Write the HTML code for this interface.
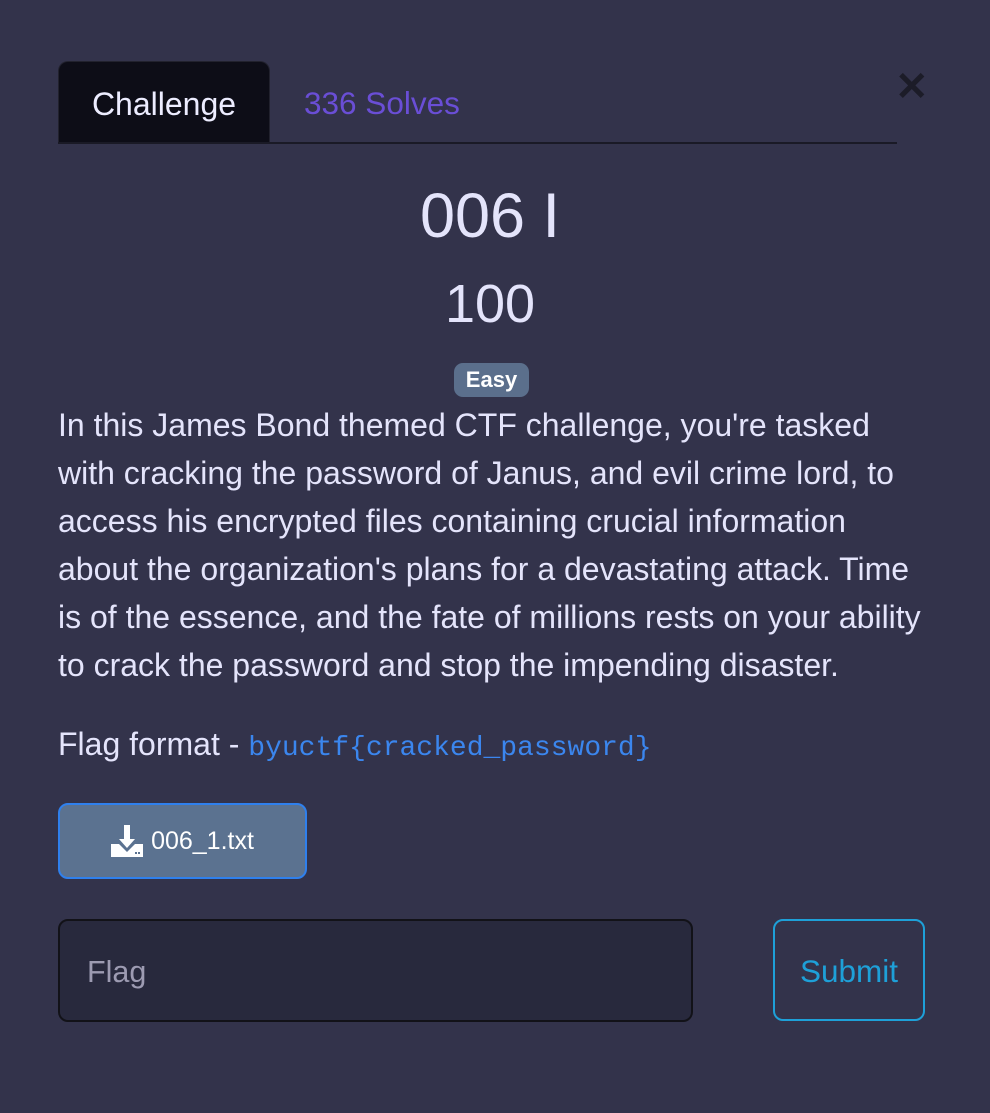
<!DOCTYPE html>
<html><head><meta charset="utf-8"><style>
*{margin:0;padding:0;box-sizing:border-box}
body{width:990px;height:1113px;background:#33334b;font-family:"Liberation Sans",sans-serif;color:#e4e4fb;position:relative;overflow:hidden}
.abs{position:absolute}
.tab{left:58px;top:61px;width:212px;height:83px;background:#0d0d17;border-radius:10px 10px 0 0;border:1px solid #22222e;border-bottom:none;font-size:32px;text-align:center;line-height:84px;color:#ececff}
.line{left:58px;top:142px;width:839px;height:2px;background:#1a1a26}
.solves{left:304px;top:85px;font-size:31.5px;color:#6a4ed6}
.x{left:895px;top:64px;font-size:40px;font-weight:bold;color:#1c1c28}
.t1{left:0;width:980px;text-align:center;top:180px;font-size:63px}
.t2{left:0;width:980px;text-align:center;top:273px;font-size:54px}
.badge{left:454px;top:363px;width:75px;height:34px;background:#5b6f8c;border-radius:9px;font-weight:bold;font-size:22px;text-align:center;line-height:34px;color:#fff}
.p{left:58px;top:401px;width:900px;font-size:32px;line-height:48.1px;white-space:nowrap}
.ff{left:58px;top:726px;font-size:32px}
.ff code{font-family:"Liberation Mono",monospace;color:#3b86ee;font-size:28px}
.btn{left:58px;top:803px;width:249px;height:76px;background:#5b7290;border:2px solid #2f80ed;border-radius:10px;color:#fff;font-size:25px;display:flex;align-items:center;justify-content:center;gap:8px}
.inp{left:58px;top:919px;width:635px;height:103px;background:#28293d;border:2px solid #121218;border-radius:10px;font-size:30.5px;color:#9d9bb2;padding-left:27px;line-height:103px}
.sub{left:773px;top:919px;width:152px;height:102px;border:2px solid #1ea0d8;border-radius:10px;color:#1ea0d8;font-size:31.5px;text-align:center;line-height:100px}
</style></head><body>
<div class="abs tab">Challenge</div>
<div class="abs line"></div>
<div class="abs solves">336 Solves</div>
<div class="abs x">✕</div>
<div class="abs t1">006 I</div>
<div class="abs t2">100</div>
<div class="abs badge">Easy</div>
<div class="abs p">In this James Bond themed CTF challenge, you're tasked<br>with cracking the password of Janus, and evil crime lord, to<br>access his encrypted files containing crucial information<br>about the organization's plans for a devastating attack. Time<br>is of the essence, and the fate of millions rests on your ability<br>to crack the password and stop the impending disaster.</div>
<div class="abs ff">Flag format - <code>byuctf{cracked_password}</code></div>
<div class="abs btn"><svg width="32" height="32" viewBox="0 0 32 32"><path d="M13 0h6v14h5l-8 9-8-9h5z" fill="#fff"/><path d="M0 19h8l8 8 8-8h8v13H0z" fill="#fff"/><rect x="24" y="27" width="2" height="2" fill="#5b7290"/><rect x="27" y="27" width="2" height="2" fill="#5b7290"/></svg><span>006_1.txt</span></div>
<div class="abs inp">Flag</div>
<div class="abs sub">Submit</div>
</body></html>
